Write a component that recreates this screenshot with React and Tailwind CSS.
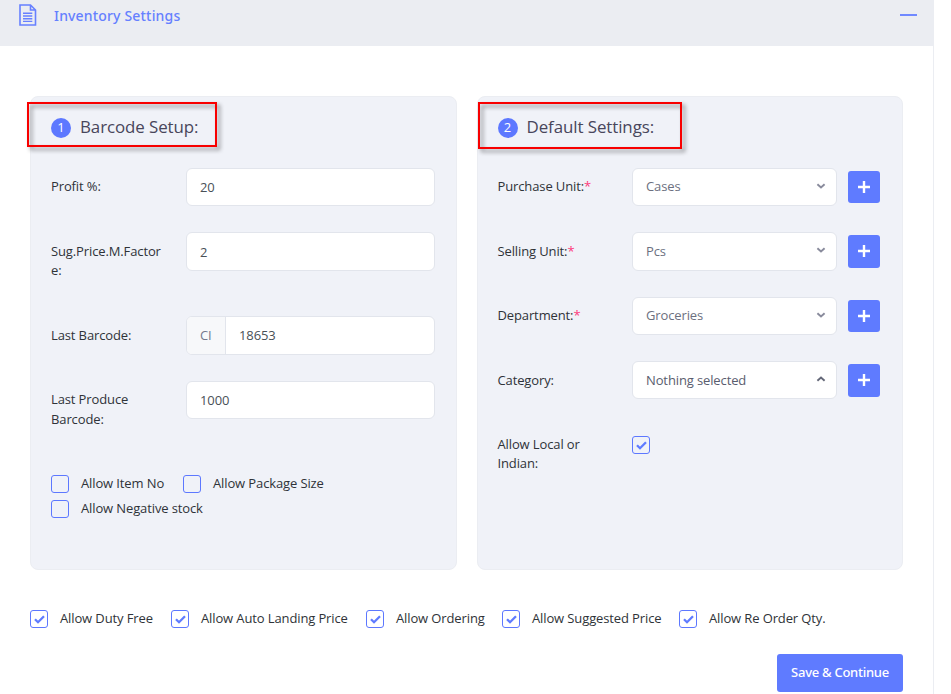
import React from "react";

const Check = () => (
  <svg width="11" height="9" viewBox="0 0 11 9" fill="none">
    <path d="M1 4.2 L4 7.2 L10 1.2" stroke="#5f7bff" strokeWidth="2.3" />
  </svg>
);

function Box({ checked }) {
  return (
    <span className="flex size-[18px] shrink-0 items-center justify-center rounded-[3px] border border-[#5d78ff]">
      {checked && <Check />}
    </span>
  );
}

function CheckItem({ label, checked, className = "" }) {
  return (
    <label className={`flex items-center ${className}`}>
      <Box checked={checked} />
      <span className="ml-3 -mt-0.5 whitespace-nowrap leading-[18px]">{label}</span>
    </label>
  );
}

function Title({ number, children, frame }) {
  return (
    <div className="flex h-5 items-center">
      <span className="flex size-5 items-center justify-center rounded-full bg-[#5d78ff] pb-px text-[13px] leading-[19px] text-white">
        {number}
      </span>
      <h3 className="ml-[9px] -mt-0.5 whitespace-nowrap text-[16.9px] leading-5 tracking-[-0.08px] text-[#48465b]">{children}</h3>
      <span className={`absolute border-2 border-[#f80000] drop-shadow-[3px_3px_2px_rgba(0,0,0,0.45)] ${frame}`} />
    </div>
  );
}

function Row({ label, required, className = "", labelClass = "w-[134.5px] pt-[9px] leading-[19px]", children }) {
  return (
    <div className={`flex items-start ${className}`}>
      <div className={`shrink-0 ${labelClass}`}>
        {label}
        {required && <span className="text-[#fd397a]">*</span>}
      </div>
      {children}
    </div>
  );
}

const Input = ({ value, className = "h-[38px] pt-px" }) => (
  <div className={`flex w-[249px] items-center rounded-md border border-[#e2e5ec] bg-white pl-[13px] text-[#495057] ${className}`}>
    {value}
  </div>
);

function Select({ value, open, tall }) {
  return (
    <>
      <div
        className={`flex w-[205px] items-center justify-between rounded-md border border-[#e2e5ec] bg-white pl-[13px] pr-[10px] ${tall ? "h-[39px]" : "h-[38px]"} ${open ? "text-[#595d6e]" : "text-[#6c7080]"}`}
      >
        <span className={open ? "pt-0.5" : ""}>{value}</span>
        <svg width="10" height="6" viewBox="0 0 10 6" fill="none" className={tall ? "-mt-[3px]" : "-mt-0.5"}>
          <path
            d={open ? "M1.4 4.8 L5 1.5 L8.6 4.8" : "M1.4 1.2 L5 4.5 L8.6 1.2"}
            stroke={open ? "#646878" : "#898b9c"}
            strokeWidth="1.9"
          />
        </svg>
      </div>
      <button
        className={`ml-[11px] mt-[3px] flex w-8 items-center justify-center rounded-[3px] bg-[#5f7bff] ${tall || open ? "h-[33px] pb-px" : "h-8"}`}
      >
        <svg width="12" height="12" viewBox="0 0 12 12">
          <path d="M6 0V12M0 6H12" stroke="white" strokeWidth="2.4" />
        </svg>
      </button>
    </>
  );
}

export default function App() {
  return (
    <div className="h-[694px] overflow-hidden bg-white font-['Open_Sans','Noto_Sans',sans-serif] text-[13px] tracking-[-0.12px] text-[#2f3338]">
      <div className="h-full w-[934px] border-r border-[#ebedf2]">
        <header className="flex h-[46px] items-start justify-between bg-[#ebedf2]">
          <div className="flex items-start pl-[19px] pt-1">
            <svg width="18" height="22" viewBox="0 0 18 22" fill="none" stroke="#6780ff" strokeWidth="1.6">
              <path d="M1 1H11.5L16.5 6V21H1Z M11.5 1V6H16.5" />
              <path d="M4 9.2H13.3M4 12H13.3M4 14.8H13.3M4 17.4H13.3" strokeWidth="1.4" />
            </svg>
            <h2 className="ml-[17px] font-['Noto_Sans','Open_Sans',sans-serif] text-[14px] font-medium leading-6 tracking-[0.17px] text-[#6580ff]">Inventory Settings</h2>
          </div>
          <span className="mr-4 mt-[14px] h-0.5 w-[17px] bg-[#7089ff]" />
        </header>

        <main className="px-[30px] pt-[50px]">
          <div className="flex justify-between">
            <section className="relative h-[474px] w-[427px] rounded-lg border border-[#ebedf2] bg-[#f0f2f8] px-5 pt-[21px]">
              <Title number="1" frame="-left-1 top-[5px] h-[45px] w-[190px]">Barcode Setup:</Title>
              <Row label="Profit %:" labelClass="w-[135px] pt-[9px] leading-[19px]" className="mt-[30px] h-16"><Input value="20" /></Row>
              <Row label={<>Sug.Price.M.Factor<br />e:</>} labelClass="w-[135px] pt-[10px] leading-[19px]" className="h-[84px]">
                <Input value="2" className="h-[39px] pt-0.5" />
              </Row>
              <Row label="Last Barcode:" labelClass="w-[135px] pt-[10px] leading-[19px]" className="h-[65px]">
                <div className="flex h-[39px] w-[249px] items-center overflow-hidden rounded-md border border-[#e2e5ec] bg-white text-[#495057]">
                  <span className="flex h-full w-[39px] items-center border-r border-[#e2e5ec] bg-[#f7f8fa] pl-[13px] text-[#74788d]">CI</span>
                  <span className="pl-[13px]">18653</span>
                </div>
              </Row>
              <Row label={<>Last Produce<br />Barcode:</>} labelClass="w-[135px] pt-[9px] leading-[19.5px]" className="h-[94px]"><Input value="1000" /></Row>
              <div className="flex flex-wrap gap-y-[7px]">
                <CheckItem label="Allow Item No" className="w-[132px]" />
                <CheckItem label="Allow Package Size" />
                <CheckItem label="Allow Negative stock" className="w-full" />
              </div>
            </section>

            <section className="relative h-[474px] w-[426px] rounded-lg border border-[#ebedf2] bg-[#f0f2f8] pl-[19.5px] pt-[21px]">
              <Title number="2" frame="left-0 top-[5px] h-[47px] w-[204px]">Default Settings:</Title>
              <Row label="Purchase Unit:" required className="mt-[30px] h-16"><Select value="Cases" /></Row>
              <Row label="Selling Unit:" required className="h-[65px]" labelClass="w-[134.5px] pt-[10px] leading-[19px]"><Select value="Pcs" tall /></Row>
              <Row label="Department:" required className="h-16"><Select value="Groceries" /></Row>
              <Row label="Category:" className="h-[65px]" labelClass="w-[134.5px] pt-[10px] leading-[19px]"><Select value="Nothing selected" open /></Row>
              <Row label={<>Allow Local or<br />Indian:</>}>
                <span className="mt-[10px]"><Box checked /></span>
              </Row>
            </section>
          </div>

          <div className="mt-10 flex">
            <CheckItem label="Allow Duty Free" checked className="w-[141px]" />
            <CheckItem label="Allow Auto Landing Price" checked className="w-[195px]" />
            <CheckItem label="Allow Ordering" checked className="w-[136px]" />
            <CheckItem label="Allow Suggested Price" checked className="w-[177px]" />
            <CheckItem label="Allow Re Order Qty." checked />
          </div>

          <div className="mt-[26px] flex justify-end">
            <button className="h-[38px] w-[126px] rounded-[3px] bg-[#5f7bff] font-['Noto_Sans','Open_Sans',sans-serif] font-medium tracking-[-0.27px] text-white">Save &amp; Continue</button>
          </div>
        </main>
      </div>
    </div>
  );
}
